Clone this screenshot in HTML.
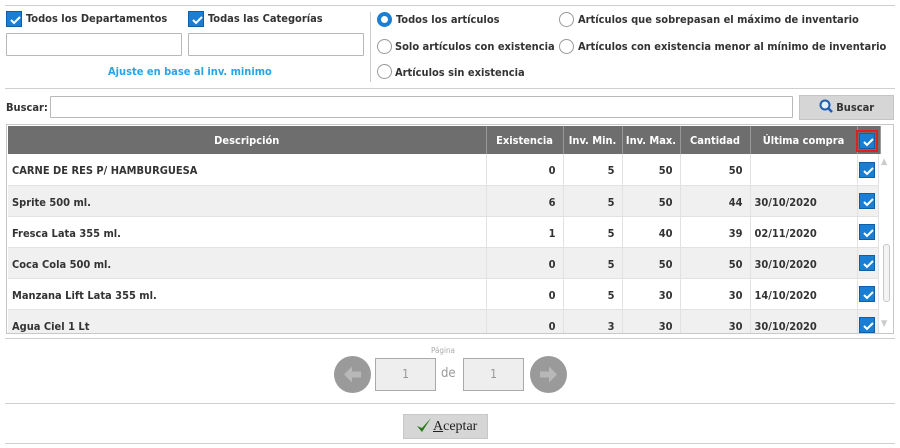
<!DOCTYPE html>
<html><head><style>
*{box-sizing:border-box;margin:0;padding:0}
body{width:900px;height:448px;background:#fff;font-family:"DejaVu Sans Condensed","DejaVu Sans",sans-serif;font-stretch:condensed;font-size:11px;font-weight:bold;color:#333;position:relative;overflow:hidden}
.a{position:absolute;white-space:nowrap}
.hl{position:absolute;left:5px;width:890px;height:1px;background:#cfcfcf}
.cb{position:absolute;width:16px;height:16px;background:#1a7fd4;border:1px solid #0f5fa8}
.cb svg{position:absolute;left:1px;top:1px}
.inp{position:absolute;border:1px solid #b8b8b8;background:#fff;border-radius:1px}
.rad{position:absolute;width:15px;height:15px;border:1px solid #999;border-radius:50%;background:#fff}
.rad.on{border:4px solid #1a7fd4}
.tw{position:absolute;left:7px;top:125px;width:886px;height:208px;overflow:hidden}
table{border-collapse:collapse;position:absolute;left:1px;top:1px;table-layout:fixed}
th{background:#6e6e6e;color:#fff;height:28px;font-size:11px;border-right:1px solid #999;text-align:center;font-weight:bold}
td{height:31px;border-right:1px solid #e2e2e2;border-bottom:1px solid #e2e2e2;text-align:right;padding-right:7px;padding-top:3px;color:#333}
td.l{text-align:left;padding-left:4px}
tr.g td{background:#f0f0f0}
</style></head><body>
<div class="hl" style="top:5px"></div>
<div class="cb" style="left:6px;top:11px"><svg width="14" height="14"><path d="M3 7l3 3 6-6" stroke="#fff" stroke-width="2" fill="none"/></svg></div>
<div class="a" style="left:26px;top:12px">Todos los Departamentos</div>
<div class="cb" style="left:188px;top:11px"><svg width="14" height="14"><path d="M3 7l3 3 6-6" stroke="#fff" stroke-width="2" fill="none"/></svg></div>
<div class="a" style="left:208px;top:12px">Todas las Categorías</div>
<div class="inp" style="left:6px;top:33px;width:176px;height:23px"></div>
<div class="inp" style="left:188px;top:33px;width:176px;height:23px"></div>
<div class="a" style="left:108px;top:65px;color:#29a3e8">Ajuste en base al inv. minimo</div>
<div class="a" style="left:370px;top:12px;width:1px;height:70px;background:#ccc"></div>
<div class="rad on" style="left:377px;top:12px"></div><div class="a" style="left:396px;top:13px">Todos los artículos</div>
<div class="rad" style="left:377px;top:39px"></div><div class="a" style="left:395px;top:40px">Solo artículos con existencia</div>
<div class="rad" style="left:377px;top:64px"></div><div class="a" style="left:395px;top:66px">Artículos sin existencia</div>
<div class="rad" style="left:559px;top:12px"></div><div class="a" style="left:578px;top:13px">Artículos que sobrepasan el máximo de inventario</div>
<div class="rad" style="left:559px;top:39px"></div><div class="a" style="left:578px;top:40px">Artículos con existencia menor al mínimo de inventario</div>
<div class="hl" style="top:88px"></div>
<div class="a" style="left:6px;top:101px">Buscar:</div>
<div class="inp" style="left:50px;top:96px;width:743px;height:22px"></div>
<div class="a" style="left:799px;top:95px;width:95px;height:25px;background:#d6d6d6;border:1px solid #c4c4c4;text-align:center;line-height:23px"><svg width="14" height="14" style="vertical-align:-2px"><circle cx="6" cy="6" r="4.5" stroke="#1f5fb0" stroke-width="2" fill="#e6f0fa"/><path d="M9 9l4 4" stroke="#1f5fb0" stroke-width="2.5"/></svg> Buscar</div>
<div class="a" style="left:6px;top:124px;width:888px;height:210px;border:1px solid #c8c8c8"></div>
<div class="tw">
<table>
<colgroup><col style="width:478px"><col style="width:77px"><col style="width:59px"><col style="width:58px"><col style="width:70px"><col style="width:107px"><col style="width:23px"></colgroup>
<tr><th>Descripción</th><th>Existencia</th><th>Inv. Min.</th><th>Inv. Max.</th><th>Cantidad</th><th>Última compra</th><th></th></tr>
<tr><td class="l">CARNE DE RES P/ HAMBURGUESA</td><td>0</td><td>5</td><td>50</td><td>50</td><td class="l"></td><td></td></tr>
<tr class="g"><td class="l">Sprite 500 ml.</td><td>6</td><td>5</td><td>50</td><td>44</td><td class="l">30/10/2020</td><td></td></tr>
<tr><td class="l">Fresca Lata 355 ml.</td><td>1</td><td>5</td><td>40</td><td>39</td><td class="l">02/11/2020</td><td></td></tr>
<tr class="g"><td class="l">Coca Cola 500 ml.</td><td>0</td><td>5</td><td>50</td><td>50</td><td class="l">30/10/2020</td><td></td></tr>
<tr><td class="l">Manzana Lift Lata 355 ml.</td><td>0</td><td>5</td><td>30</td><td>30</td><td class="l">14/10/2020</td><td></td></tr>
<tr class="g"><td class="l">Agua Ciel 1 Lt</td><td>0</td><td>3</td><td>30</td><td>30</td><td class="l">30/10/2020</td><td></td></tr>
</table>
</div>
<div class="a" style="left:856px;top:130px;width:22px;height:22px;border:2px solid #e02020"></div>
<div class="cb" style="left:859px;top:133px"><svg width="14" height="14"><path d="M3 7l3 3 6-6" stroke="#fff" stroke-width="2" fill="none"/></svg></div>
<div class="cb" style="left:859px;top:162px"><svg width="14" height="14"><path d="M3 7l3 3 6-6" stroke="#fff" stroke-width="2" fill="none"/></svg></div>
<div class="cb" style="left:859px;top:193px"><svg width="14" height="14"><path d="M3 7l3 3 6-6" stroke="#fff" stroke-width="2" fill="none"/></svg></div>
<div class="cb" style="left:859px;top:224px"><svg width="14" height="14"><path d="M3 7l3 3 6-6" stroke="#fff" stroke-width="2" fill="none"/></svg></div>
<div class="cb" style="left:859px;top:255px"><svg width="14" height="14"><path d="M3 7l3 3 6-6" stroke="#fff" stroke-width="2" fill="none"/></svg></div>
<div class="cb" style="left:859px;top:286px"><svg width="14" height="14"><path d="M3 7l3 3 6-6" stroke="#fff" stroke-width="2" fill="none"/></svg></div>
<div class="a" style="left:859px;top:317px;width:16px;height:16px;overflow:hidden"><div class="cb" style="left:0;top:0"><svg width="14" height="14"><path d="M3 7l3 3 6-6" stroke="#fff" stroke-width="2" fill="none"/></svg></div></div>
<div class="a" style="left:878px;top:154px;width:15px;height:179px;background:#fff;border-left:1px solid #e2e2e2"></div>
<div class="a" style="left:881px;top:157px;font-size:9px;color:#ccc">▲</div>
<div class="a" style="left:881px;top:319px;font-size:9px;color:#ccc">▼</div>
<div class="a" style="left:883px;top:244px;width:7px;height:58px;border:1px solid #c8c8c8;border-radius:3px;background:#f4f4f4"></div>
<div class="hl" style="top:338px"></div>
<div class="a" style="left:431px;top:346px;font-size:8px;font-weight:normal;color:#aaa">Página</div>
<div class="a" style="left:334px;top:356px;width:37px;height:37px;border-radius:50%;background:#9a9a9a"><svg width="37" height="37"><path d="M10 18.5l8-8v5h9v6h-9v5z" fill="#b8b8b8"/></svg></div>
<div class="a" style="left:375px;top:358px;width:61px;height:33px;border:1px solid #aaa;background:#eee;text-align:center;line-height:31px;font-weight:normal;color:#999;font-size:12px">1</div>
<div class="a" style="left:441px;top:366px;font-weight:normal;color:#999;font-size:13px">de</div>
<div class="a" style="left:463px;top:358px;width:61px;height:33px;border:1px solid #aaa;background:#eee;text-align:center;line-height:31px;font-weight:normal;color:#999;font-size:12px">1</div>
<div class="a" style="left:530px;top:356px;width:37px;height:37px;border-radius:50%;background:#9a9a9a"><svg width="37" height="37"><path d="M27 18.5l-8-8v5h-9v6h9v5z" fill="#b8b8b8"/></svg></div>
<div class="hl" style="top:403px"></div>
<div class="a" style="left:403px;top:414px;width:85px;height:25px;background:#d6d6d6;border:1px solid #c8c8c8;font-family:'Liberation Serif',serif;font-size:14px;font-weight:normal;color:#222;line-height:23px;padding-left:11px"><svg width="18" height="18" style="vertical-align:-4px"><path d="M2 10l5 6L16 2 7 12z" fill="#2a7a1a"/></svg><u>A</u>ceptar</div>
<div class="hl" style="top:443px"></div>
</body></html>
